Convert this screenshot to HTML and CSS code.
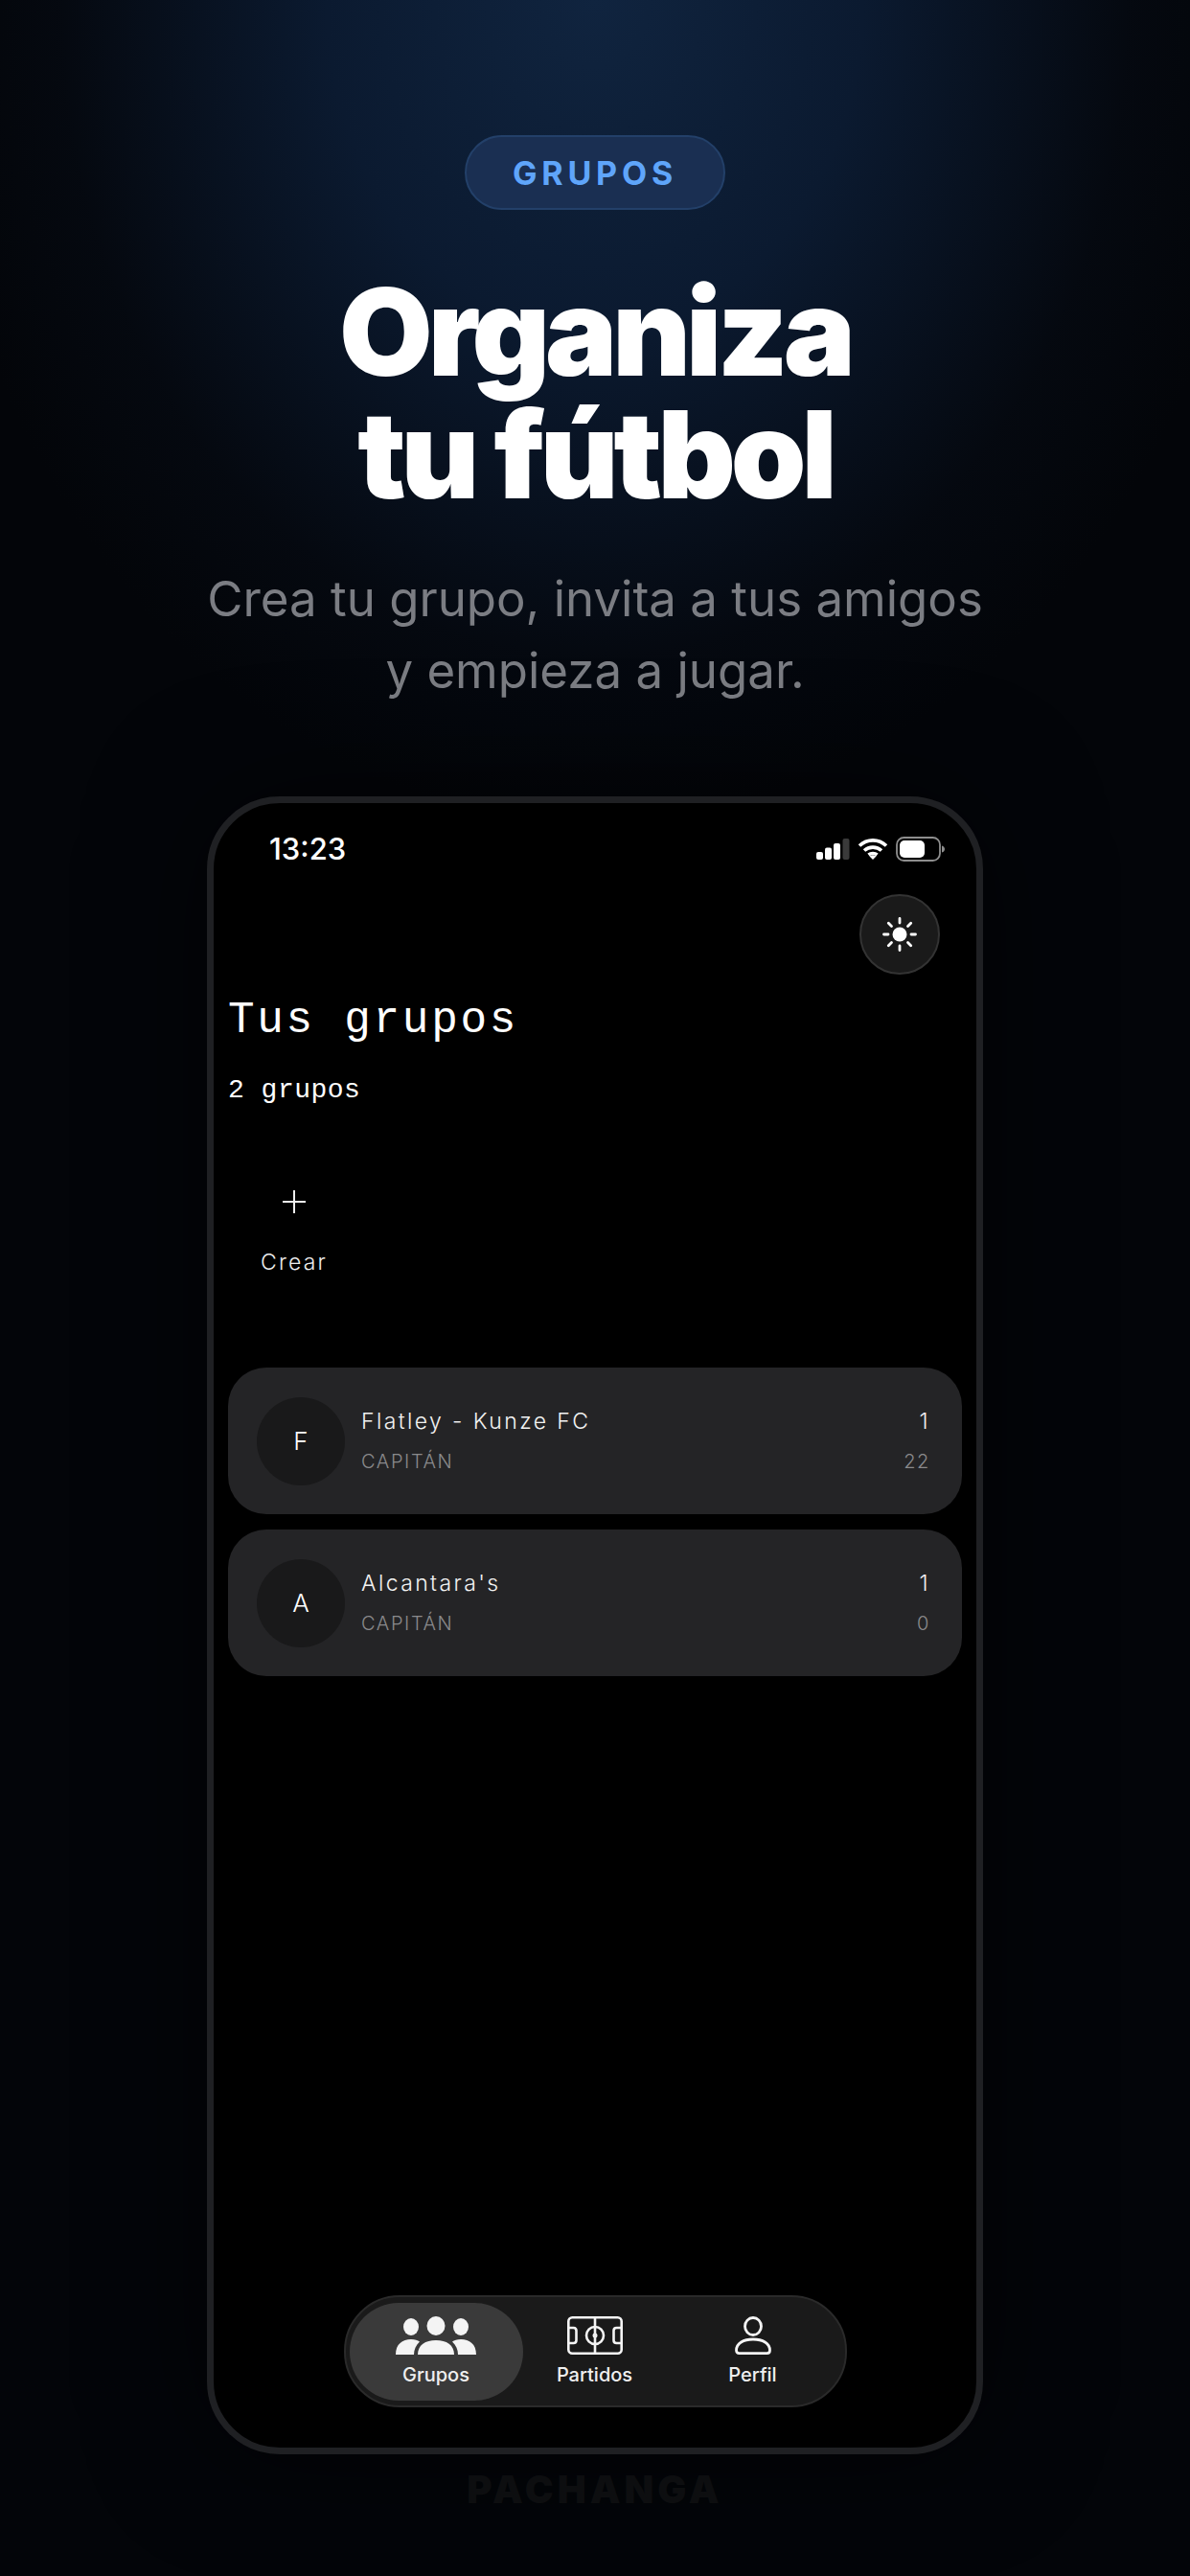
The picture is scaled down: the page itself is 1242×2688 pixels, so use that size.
FILE: index.html
```html
<!DOCTYPE html>
<html>
<head>
    <meta name='viewport' content='width=device-width, initial-scale=1'>
    <link rel="stylesheet" href="styles.css">
</head>
<body>
<div class="page">
    <div class="badge">GRUPOS</div>
    <h1 class="headline">Organiza<br>tu fútbol</h1>
    <p class="lead">Crea tu grupo, invita a tus amigos<br>y empieza a jugar.</p>

    <div class="phone">
        <div class="status">
            <span class="time">13:23</span>
            <div class="status-icons">
                <svg width="36" height="24" viewBox="0 0 36 24">
                    <rect x="1" y="15" width="7" height="8" rx="2" fill="#fff"/>
                    <rect x="10" y="10.5" width="7" height="12.5" rx="2" fill="#fff"/>
                    <rect x="19" y="6" width="7" height="17" rx="2" fill="#fff"/>
                    <rect x="28.500" y="1" width="7" height="22" rx="2" fill="#3a3a3a"/>
                </svg>
                <svg width="32" height="24" viewBox="0 0 32 24">
                    <path d="M2 8.500C10 1 22 1 30 8.500M7 13.500C12 9 20 9 25 13.500M11.500 18C14 16 18 16 20.500 18" fill="none" stroke="#fff" stroke-width="3.600"/>
                    <path d="M12.500 19.500C14.500 17.800 17.500 17.800 19.500 19.500L16 23Z" fill="#fff"/>
                </svg>
                <svg width="52" height="26" viewBox="0 0 52 26">
                    <rect x="1" y="1" width="45" height="24" rx="7.500" fill="none" stroke="#8e8e8e" stroke-width="1.800"/>
                    <rect x="4" y="4" width="26" height="18" rx="5" fill="#fff"/>
                    <path d="M48 9.500C50 10 51 11.500 51 13C51 14.500 50 16 48 16.500Z" fill="#8e8e8e"/>
                </svg>
            </div>
        </div>

        <div class="theme-row">
            <div class="theme-btn">
                <svg width="36" height="36" viewBox="0 0 36 36">
                    <circle cx="18" cy="18" r="7.500" fill="#fff"/>
                    <path d="M18 1.500V6M18 30V34.500M1.500 18H6M30 18H34.500M6.300 6.300L9.500 9.500M26.500 26.500L29.700 29.700M6.300 29.700L9.500 26.500M26.500 9.500L29.700 6.300" stroke="#fff" stroke-width="2.800" stroke-linecap="round"/>
                </svg>
            </div>
        </div>

        <div class="title">Tus grupos</div>
        <div class="count">2 grupos</div>

        <div class="create">
            <svg width="24" height="24" viewBox="0 0 24 24">
                <path d="M12 0.500V23.500M0.500 12H23.500" stroke="#eee" stroke-width="2" stroke-linecap="round"/>
            </svg>
            <span class="create-label">Crear</span>
        </div>

        <div class="groups">
            <div class="group">
                <div class="avatar">F</div>
                <div class="group-body">
                    <div class="group-row"><span class="group-name">Flatley - Kunze FC</span><span class="group-name">1</span></div>
                    <div class="group-row"><span class="group-meta">CAPITÁN</span><span class="group-meta">22</span></div>
                </div>
            </div>
            <div class="group">
                <div class="avatar">A</div>
                <div class="group-body">
                    <div class="group-row"><span class="group-name">Alcantara's</span><span class="group-name">1</span></div>
                    <div class="group-row"><span class="group-meta">CAPITÁN</span><span class="group-meta">0</span></div>
                </div>
            </div>
        </div>

        <div class="tabbar">
            <div class="tab tab-active">
                <svg width="84" height="40" viewBox="0 0 84 40">
                    <ellipse cx="16" cy="11" rx="8" ry="9" fill="#f4f4f4"/>
                    <ellipse cx="68" cy="11" rx="8" ry="9" fill="#f4f4f4"/>
                    <ellipse cx="42" cy="10" rx="9.500" ry="10" fill="#f4f4f4"/>
                    <path d="M0 40C0 29 7 24 16 24C20 24 23 25 25 26.500C21 30 19 35 19 40Z" fill="#f4f4f4"/>
                    <path d="M84 40C84 29 77 24 68 24C64 24 61 25 59 26.500C63 30 65 35 65 40Z" fill="#f4f4f4"/>
                    <path d="M23 40C23 30 31 25 42 25C53 25 61 30 61 40Z" fill="#f4f4f4"/>
                </svg>
                <span class="tab-label">Grupos</span>
            </div>
            <div class="tab tab-mid">
                <svg width="58" height="40" viewBox="0 0 58 40" fill="none" stroke="#f4f4f4" stroke-width="2.600">
                    <rect x="1.300" y="1.300" width="55.400" height="37.400" rx="4"/>
                    <path d="M29 1.300V38.700M1.300 12H6.500C9 12 9.500 13.500 9.500 15V25C9.500 26.500 9 28 6.500 28H1.300M56.700 12H51.500C49 12 48.500 13.500 48.500 15V25C48.500 26.500 49 28 51.500 28H56.700"/>
                    <circle cx="29" cy="20" r="9"/>
                    <circle cx="29" cy="20" r="2.500" fill="#f4f4f4" stroke="none"/>
                </svg>
                <span class="tab-label">Partidos</span>
            </div>
            <div class="tab tab-last">
                <svg width="38" height="40" viewBox="0 0 38 40" fill="none" stroke="#f4f4f4" stroke-width="2.800">
                    <ellipse cx="19" cy="10.500" rx="8.500" ry="9"/>
                    <path d="M1.500 35.500C1.500 28 9 24 19 24C29 24 36.500 28 36.500 35.500C36.500 37.500 35.500 38.600 33.500 38.600H4.500C2.500 38.600 1.500 37.500 1.500 35.500Z"/>
                </svg>
                <span class="tab-label">Perfil</span>
            </div>
        </div>
    </div>

    <div class="brand">PACHANGA</div>
</div>
</body>
</html>
```

FILE: styles.css
```css
* {
    box-sizing: border-box;
}

body {
    margin: 0;
    background: #030509;
}

.page {
    width: 1242px;
    height: 2688px;
    overflow: hidden;
    display: flex;
    flex-direction: column;
    align-items: center;
    padding-top: 141px;
    font-family: 'Inter', sans-serif;
    background:
        radial-gradient(ellipse 700px 860px at 50% 0, #10243f 0%, #0b1a30 40%, rgba(6, 11, 20, 0.6) 80%, rgba(3, 5, 9, 0) 100%),
        #030509;
}

.badge {
    width: 272px;
    height: 78px;
    display: flex;
    align-items: center;
    justify-content: center;
    border-radius: 39px;
    border: 2px solid #234069;
    background: #1a2f52;
    color: #5fa5fa;
    font-size: 34px;
    font-weight: 700;
    letter-spacing: 4.800px;
}

.headline {
    margin: 63px 0 0;
    color: #fff;
    font-size: 126px;
    font-weight: 900;
    line-height: 128px;
    letter-spacing: -5px;
    text-align: center;
}

.lead {
    margin: 49px 0 0;
    color: #7b7d83;
    font-size: 51px;
    font-weight: 400;
    line-height: 75px;
    text-align: center;
}

.phone {
    width: 810px;
    height: 1730px;
    margin-top: 94px;
    flex-shrink: 0;
    display: flex;
    flex-direction: column;
    border: 7px solid #1f2023;
    border-radius: 76px;
    background: #000;
    box-shadow: 0 0 120px rgba(0, 0, 0, 0.6);
}

.status {
    height: 95px;
    flex-shrink: 0;
    display: flex;
    align-items: center;
    justify-content: space-between;
    padding: 0 32px 0 58px;
}

.time {
    color: #fff;
    font-size: 31px;
    font-weight: 500;
}

.status-icons {
    display: flex;
    align-items: center;
    gap: 8px;
}

.status-icons svg {
    display: block;
}

.theme-row {
    display: flex;
    justify-content: flex-end;
    padding-right: 38px;
}

.theme-btn {
    width: 84px;
    height: 84px;
    display: flex;
    align-items: center;
    justify-content: center;
    border-radius: 50%;
    background: #1a1a1a;
    border: 2px solid #333;
}

.title {
    margin: 18px 0 0 15px;
    color: #fff;
    font-family: 'Liberation Mono', monospace;
    font-size: 46px;
    line-height: 60px;
    letter-spacing: 2.700px;
}

.count {
    margin: 25px 0 0 15px;
    color: #fff;
    font-family: 'Liberation Mono', monospace;
    font-size: 28px;
    line-height: 36px;
    letter-spacing: 0.500px;
}

.create {
    width: 68px;
    margin: 86px 0 0 50px;
    display: flex;
    flex-direction: column;
    align-items: center;
    gap: 37px;
}

.create svg {
    display: block;
}

.create-label {
    color: #eee;
    font-size: 23px;
    font-weight: 300;
    line-height: 28px;
    letter-spacing: 2.200px;
}

.groups {
    margin: 96px 15px 0 15px;
    display: flex;
    flex-direction: column;
    gap: 16px;
}

.group {
    height: 153px;
    display: flex;
    align-items: center;
    gap: 17px;
    padding: 0 33px 0 30px;
    border-radius: 40px;
    background: #242426;
}

.avatar {
    width: 92px;
    height: 92px;
    flex-shrink: 0;
    display: flex;
    align-items: center;
    justify-content: center;
    border-radius: 50%;
    background: #19191a;
    color: #fff;
    font-size: 26px;
    font-weight: 300;
}

.group-body {
    flex: 1;
    display: flex;
    flex-direction: column;
    gap: 14px;
}

.group-row {
    display: flex;
    justify-content: space-between;
    align-items: center;
}

.group-name {
    color: #f2f2f2;
    font-size: 23px;
    font-weight: 300;
    line-height: 28px;
    letter-spacing: 2.400px;
}

.group-meta {
    color: #8a8a8c;
    font-size: 20px;
    font-weight: 300;
    line-height: 28px;
    letter-spacing: 1.600px;
}

.tabbar {
    width: 525px;
    height: 117px;
    margin: auto auto 42px;
    display: flex;
    align-items: center;
    padding: 0 4px;
    border-radius: 58px;
    background: #1a1a1a;
    border: 2px solid #2a2a2a;
}

.tab {
    width: 150px;
    height: 102px;
    display: flex;
    flex-direction: column;
    align-items: center;
    justify-content: center;
    gap: 9px;
}

.tab svg {
    display: block;
}

.tab-active {
    width: 181px;
    border-radius: 51px;
    background: #3a3a3a;
}

.tab-last {
    width: 180px;
}

.tab-label {
    color: #efefef;
    font-size: 20px;
    font-weight: 500;
    line-height: 24px;
}

.brand {
    margin-top: 14px;
    color: #0d0e10;
    font-size: 40px;
    font-weight: 900;
    line-height: 46px;
    letter-spacing: 4px;
}
```
